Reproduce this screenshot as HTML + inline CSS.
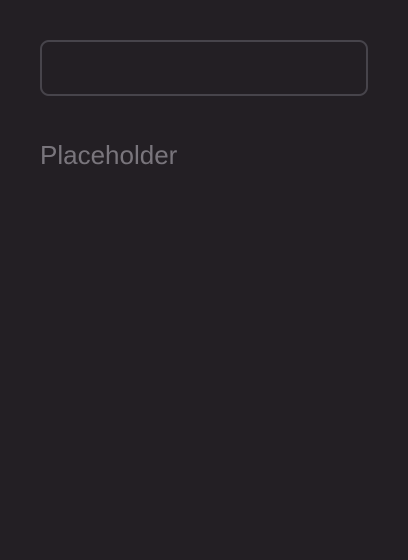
<!DOCTYPE html>
<html><head><meta charset="utf-8"><style>
html,body{margin:0;padding:0;width:408px;height:560px;background:#231f24;overflow:hidden}
.box{position:absolute;left:40px;top:40px;width:324px;height:52px;border:2px solid #47444b;border-radius:9px}
.ph{position:absolute;left:40px;top:140px;font:26px "Liberation Sans",sans-serif;color:#79757c;line-height:30px}
</style></head><body>
<div class="box"></div>
<div class="ph">Placeholder</div>
</body></html>
